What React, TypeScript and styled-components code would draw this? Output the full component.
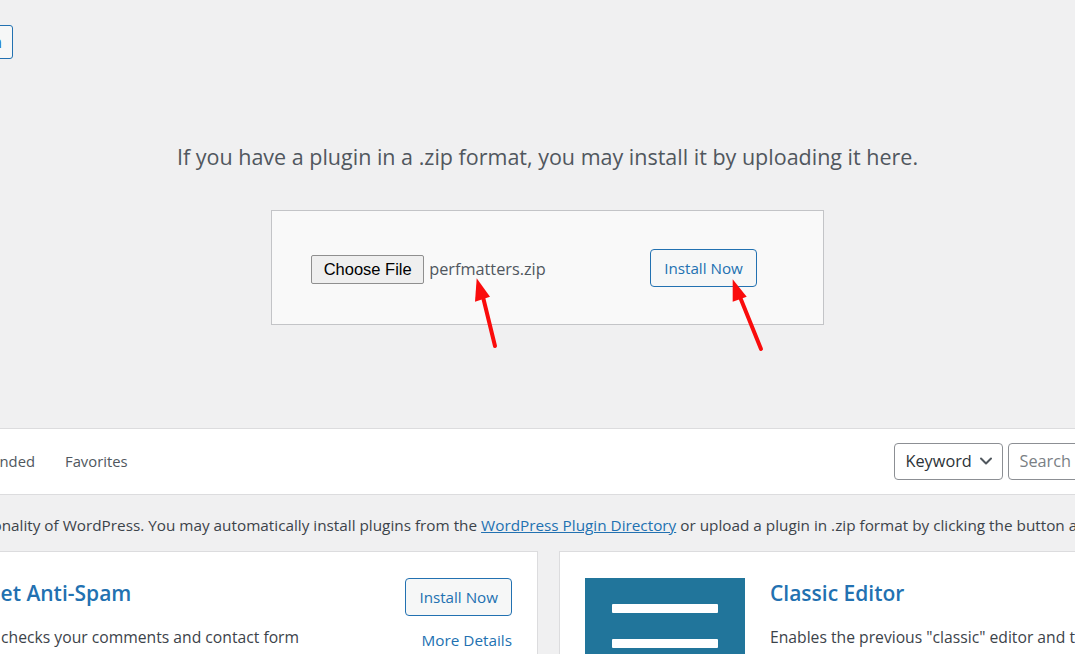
import styled, { createGlobalStyle } from "styled-components";

const GlobalStyle = createGlobalStyle`
    body {
        margin: 0;
        overflow: hidden;
        background: #f0f0f1;
        font-family: "Open Sans", "Noto Sans", sans-serif;
        color: #3c434a;
    }
`;

export default function App() {
    return (
        <Viewport>
            <GlobalStyle />
            <Stage>
                <HeaderRow>
                    <PageTitle>Add Plugins</PageTitle>
                    <TitleAction>Upload Plugin</TitleAction>
                </HeaderRow>

                <UploadSection>
                    <InstallHelp>If you have a plugin in a .zip format, you may install it by uploading it here.</InstallHelp>
                    <UploadForm>
                        <FileField>
                            <ChooseButton>Choose File</ChooseButton>
                            <FileName>perfmatters.zip</FileName>
                        </FileField>
                        <OutlineButton>Install Now</OutlineButton>
                    </UploadForm>
                </UploadSection>

                <FilterBar>
                    <FilterLinks>
                        <FilterLink>Featured</FilterLink>
                        <FilterLink>Popular</FilterLink>
                        <FilterLink>Recommended</FilterLink>
                        <FilterLink>Favorites</FilterLink>
                    </FilterLinks>
                    <SearchForm>
                        <KeywordSelect>
                            Keyword
                            <svg width="14" height="14" viewBox="0 0 14 14" fill="none">
                                <path d="M2 4.5l5 5 5-5" stroke="#50575e" strokeWidth="2" strokeLinecap="round" strokeLinejoin="round" />
                            </svg>
                        </KeywordSelect>
                        <SearchInput placeholder="Search plugins..." />
                    </SearchForm>
                </FilterBar>

                <Intro>
                    Plugins extend and expand the functionality of WordPress. You may automatically install plugins from the{" "}
                    <IntroLink>WordPress Plugin Directory</IntroLink> or upload a plugin in .zip format by clicking the button at the top of this page.
                </Intro>

                <CardGrid>
                    <PluginCard>
                        <PluginIcon $color="#6b8fb0" />
                        <CardBody>
                            <CardTitle>Akismet Anti-Spam</CardTitle>
                            <CardDesc>Akismet checks your comments and contact form submissions against our global database of spam.</CardDesc>
                        </CardBody>
                        <CardActions>
                            <OutlineButton>Install Now</OutlineButton>
                            <MoreDetails>More Details</MoreDetails>
                        </CardActions>
                    </PluginCard>
                    <PluginCard>
                        <PluginIcon $color="#21759b">
                            <IconBar />
                            <IconBar />
                            <IconBar />
                        </PluginIcon>
                        <CardBody>
                            <CardTitle>Classic Editor</CardTitle>
                            <CardDesc>Enables the previous "classic" editor and the old-style Edit Post screen with TinyMCE, Meta Boxes, etc.</CardDesc>
                        </CardBody>
                        <CardActions>
                            <OutlineButton>Install Now</OutlineButton>
                            <MoreDetails>More Details</MoreDetails>
                        </CardActions>
                    </PluginCard>
                </CardGrid>
            </Stage>

            <Annotations width="1075" height="654" viewBox="0 0 1075 654">
                <line x1="495" y1="346" x2="483" y2="297" stroke="#fa0c0c" strokeWidth="4" strokeLinecap="round" />
                <polygon points="476.7,278.3 475,301.7 490,296.7" fill="#fa0c0c" />
                <line x1="761" y1="349" x2="740" y2="297" stroke="#fa0c0c" strokeWidth="4" strokeLinecap="round" />
                <polygon points="732.7,279.3 732.7,301.7 746.7,296.7" fill="#fa0c0c" />
            </Annotations>
        </Viewport>
    );
}

const Viewport = styled.div`
    position: relative;
    width: 1075px;
    height: 654px;
    overflow: hidden;
`;

// the page is scrolled sideways, so the wrap starts left of the window
const Stage = styled.div`
    width: 1695px;
    margin-left: -300px;
    padding: 25px 27.5px 0;
    box-sizing: border-box;
`;

const HeaderRow = styled.div`
    display: flex;
    align-items: center;
    justify-content: flex-end;
    gap: 10px;
    width: 285.5px;
    height: 34px;
`;

const PageTitle = styled.h1`
    margin: 0;
    font-size: 28.75px;
    font-weight: 400;
    color: #1d2327;
    white-space: nowrap;
`;

const TitleAction = styled.button`
    height: 34px;
    padding: 0 10px;
    border: 1px solid #2271b1;
    border-radius: 3px;
    background: #f6f7f7;
    color: #2271b1;
    font-family: inherit;
    font-size: 15.5px;
    white-space: nowrap;
`;

const UploadSection = styled.div`
    display: flex;
    flex-direction: column;
    align-items: center;
    padding-top: 82px;
`;

const InstallHelp = styled.p`
    margin: 0;
    font-size: 21.5px;
    line-height: 31.5px;
    color: #50575e;
`;

const UploadForm = styled.div`
    display: flex;
    align-items: center;
    margin-top: 37px;
    padding: 38px 66px 37px 39px;
    background: #f9f9f9;
    border: 1px solid #c3c4c7;
`;

const FileField = styled.div`
    display: flex;
    align-items: center;
    gap: 5px;
    width: 339px;
    padding-top: 3px;
`;

const ChooseButton = styled.span`
    display: flex;
    align-items: center;
    justify-content: center;
    width: 113px;
    height: 29px;
    box-sizing: border-box;
    border: 1px solid #8f8f8f;
    border-radius: 2px;
    background: #efefef;
    color: #000;
    font-family: "Liberation Sans", Arial, sans-serif;
    font-size: 16.5px;
`;

const FileName = styled.span`
    font-size: 16.3px;
    color: #50575e;
`;

const OutlineButton = styled.button`
    height: 38px;
    padding: 0 13px;
    border: 1px solid #2271b1;
    border-radius: 4px;
    background: #f6f7f7;
    color: #2271b1;
    font-family: inherit;
    font-size: 15.2px;
    white-space: nowrap;
`;

const FilterBar = styled.div`
    display: flex;
    align-items: center;
    justify-content: space-between;
    height: 65px;
    margin-top: 103px;
    padding: 0 10px 0 27px;
    background: #fff;
    border-top: 1px solid #dcdcde;
    border-bottom: 1px solid #dcdcde;
`;

const FilterLinks = styled.div`
    display: flex;
    gap: 30px;
`;

const FilterLink = styled.span`
    font-size: 14.8px;
    color: #50575e;
`;

const SearchForm = styled.div`
    display: flex;
    gap: 5px;
`;

const KeywordSelect = styled.div`
    display: flex;
    align-items: center;
    justify-content: space-between;
    width: 109px;
    height: 37px;
    padding: 0 9px 0 11px;
    box-sizing: border-box;
    border: 1px solid #8c8f94;
    border-radius: 4px;
    background: #fff;
    color: #2c3338;
    font-size: 16.3px;
`;

const SearchInput = styled.input`
    width: 350px;
    height: 37px;
    padding: 0 11px;
    box-sizing: border-box;
    border: 1px solid #8c8f94;
    border-radius: 4px;
    font-family: inherit;
    font-size: 16.3px;
    &::placeholder {
        color: #7a7f85;
    }
`;

const Intro = styled.p`
    margin: 18px 0 0;
    font-size: 15.3px;
    line-height: 24px;
    white-space: nowrap;
`;

const IntroLink = styled.a`
    color: #2271b1;
    text-decoration: underline;
`;

const CardGrid = styled.div`
    display: grid;
    grid-template-columns: 1fr 1fr;
    gap: 21px;
    margin: 14px -2px 0 0;
`;

const PluginCard = styled.div`
    display: flex;
    gap: 25px;
    height: 200px;
    padding: 26px 25px 0 25px;
    box-sizing: border-box;
    background: #fff;
    border: 1px solid #dcdcde;
`;

const PluginIcon = styled.div<{ $color: string }>`
    display: flex;
    flex-direction: column;
    align-items: center;
    gap: 26px;
    flex: none;
    width: 160px;
    height: 160px;
    padding-top: 26px;
    box-sizing: border-box;
    background: ${(p) => p.$color};
`;

const IconBar = styled.div`
    width: 106px;
    height: 9px;
    background: #fff;
    border-radius: 1px;
`;

const CardBody = styled.div`
    flex: 1;
    min-width: 0;
`;

const CardTitle = styled.h3`
    margin: 1px 0 0;
    font-size: 21px;
    line-height: 29px;
    font-weight: 600;
    color: #2271b1;
`;

const CardDesc = styled.p`
    margin: 17px 0 0;
    font-size: 15.7px;
    line-height: 24px;
    color: #3c434a;
`;

const CardActions = styled.div`
    display: flex;
    flex-direction: column;
    align-items: flex-end;
    gap: 12px;
    flex: none;
    width: 150px;
`;

const MoreDetails = styled.a`
    font-size: 15.3px;
    line-height: 24px;
    color: #2271b1;
`;

const Annotations = styled.svg`
    position: absolute;
    left: 0;
    top: 0;
    pointer-events: none;
`;
